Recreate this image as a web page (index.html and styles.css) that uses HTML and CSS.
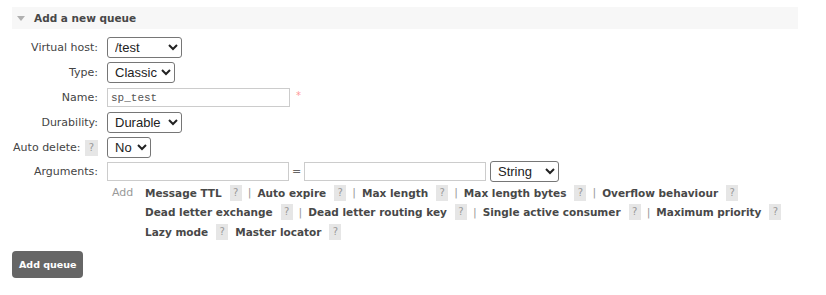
FILE: index.html
```html
<!DOCTYPE html>
<html>
<head>
    <title>Add a new queue</title>
    <link rel="stylesheet" href="styles.css">
</head>
<body>
    <div class="section">
        <h2 class="section-head"><span class="caret"></span>Add a new queue</h2>

        <form class="queue-form">
            <div class="row">
                <label class="lbl">Virtual host:</label>
                <div class="field">
                    <select class="sel w-vhost">
                        <option>/test</option>
                        <option>/</option>
                    </select>
                </div>
            </div>
            <div class="row">
                <label class="lbl">Type:</label>
                <div class="field">
                    <select class="sel w-type">
                        <option>Classic</option>
                        <option>Quorum</option>
                        <option>Stream</option>
                    </select>
                </div>
            </div>
            <div class="row">
                <label class="lbl">Name:</label>
                <div class="field">
                    <input type="text" class="txt w-name" value="sp_test">
                    <span class="req">*</span>
                </div>
            </div>
            <div class="row">
                <label class="lbl">Durability:</label>
                <div class="field">
                    <select class="sel w-dur">
                        <option>Durable</option>
                        <option>Transient</option>
                    </select>
                </div>
            </div>
            <div class="row">
                <label class="lbl">Auto delete: <span class="help">?</span></label>
                <div class="field">
                    <select class="sel w-auto">
                        <option>No</option>
                        <option>Yes</option>
                    </select>
                </div>
            </div>
            <div class="row row-args">
                <label class="lbl">Arguments:</label>
                <div class="field">
                    <input type="text" class="txt w-arg">
                    <span class="eq">=</span>
                    <input type="text" class="txt w-arg">
                    <select class="sel w-kind">
                        <option>String</option>
                        <option>Number</option>
                        <option>Boolean</option>
                        <option>List</option>
                    </select>
                </div>
            </div>
            <div class="row-add">
                <span class="add-word">Add</span>
                <div class="arg-links">
                    <div class="arg-line">
                        <a class="arg">Message TTL</a><span class="help">?</span><span class="sep">|</span>
                        <a class="arg">Auto expire</a><span class="help">?</span><span class="sep">|</span>
                        <a class="arg">Max length</a><span class="help">?</span><span class="sep">|</span>
                        <a class="arg">Max length bytes</a><span class="help">?</span><span class="sep">|</span>
                        <a class="arg">Overflow behaviour</a><span class="help">?</span>
                    </div>
                    <div class="arg-line">
                        <a class="arg">Dead letter exchange</a><span class="help">?</span><span class="sep">|</span>
                        <a class="arg">Dead letter routing key</a><span class="help">?</span><span class="sep">|</span>
                        <a class="arg">Single active consumer</a><span class="help">?</span><span class="sep">|</span>
                        <a class="arg">Maximum priority</a><span class="help">?</span>
                    </div>
                    <div class="arg-line">
                        <a class="arg">Lazy mode</a><span class="help">?</span>
                        <a class="arg arg-next">Master locator</a><span class="help">?</span>
                    </div>
                </div>
            </div>
        </form>

        <button class="add-btn">Add queue</button>
    </div>
</body>
</html>
```

FILE: styles.css
```css
body {
    margin: 0;
    padding: 7px 28px 0 12px;
    font-family: "DejaVu Sans", Verdana, sans-serif;
    font-size: 11px;
    color: #444;
    background: #fff;
}

.section-head {
    display: flex;
    align-items: center;
    height: 22px;
    margin: 0;
    padding-left: 5px;
    background-color: #f7f7f7;
    font-size: 10.5px;
    font-weight: bold;
    color: #484848;
}

.caret {
    width: 0;
    height: 0;
    margin-right: 9px;
    border-left: 4px solid transparent;
    border-right: 4px solid transparent;
    border-top: 5px solid #b0b0b0;
}

.queue-form {
    margin-top: 6px;
}

.row {
    display: grid;
    grid-template-columns: 86px 1fr;
    column-gap: 9px;
    align-items: center;
    height: 25px;
}

.row-args {
    height: 23px;
}

.lbl {
    text-align: right;
    color: #444;
    white-space: nowrap;
}

.lbl .help {
    margin-left: 1px;
}

.field {
    display: flex;
    align-items: center;
}

.sel {
    height: 21px;
    padding: 0 0 0 3px;
    font-family: "Liberation Sans", Arial, sans-serif;
    font-size: 13px;
    color: #222;
    border: 1px solid #767676;
    border-radius: 3px;
    background: #fff;
}

.w-vhost { width: 75px; }
.w-type { width: 68px; }
.w-dur { width: 75px; }
.w-auto { width: 44px; }
.w-kind { width: 69px; margin-left: 4px; }

.txt {
    box-sizing: border-box;
    height: 19px;
    padding: 0 3px;
    border: 1px solid #ccc;
    font-family: "Liberation Mono", "Courier New", monospace;
    font-size: 11px;
    color: #555;
}

.w-name { width: 183px; }
.w-arg { width: 182px; }

.req {
    margin-left: 6px;
    margin-top: -4px;
    color: #f99;
    font-size: 10px;
}

.eq {
    width: 15px;
    text-align: center;
    color: #666;
}

.help {
    display: inline-block;
    width: 13px;
    height: 16px;
    line-height: 16px;
    text-align: center;
    background-color: #e6e6e6;
    color: #999;
    font-size: 10px;
    font-weight: normal;
    vertical-align: middle;
}

.row-add {
    display: flex;
    padding-left: 100px;
}

.add-word {
    width: 33px;
    line-height: 19.5px;
    color: #999;
}

.arg-line {
    display: flex;
    align-items: center;
    height: 19.5px;
    white-space: nowrap;
}

.arg {
    font-weight: bold;
    font-size: 10.5px;
    color: #484848;
    cursor: pointer;
}

.arg-line .help {
    width: 12px;
    margin-left: 8px;
}

.arg-next {
    margin-left: 7px;
}

.sep {
    margin: 0 6px 0 6px;
    color: #999;
}

.add-btn {
    margin-top: 9px;
    height: 27px;
    padding: 0 7px;
    border: none;
    border-radius: 4px;
    background-color: #666;
    color: #fff;
    font-family: "DejaVu Sans", Verdana, sans-serif;
    font-size: 9.5px;
    font-weight: bold;
    cursor: pointer;
}
```
